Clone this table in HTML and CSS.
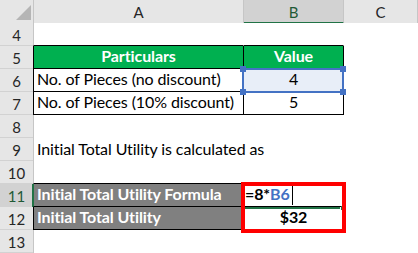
FILE: index.html
```html
<!DOCTYPE html>
<html>
<head>
<meta charset="utf-8">
<link rel="stylesheet" href="styles.css">
</head>
<body>
<div class="sheet">
  <div class="row hdr">
    <div class="corner"><svg width="33" height="23" viewBox="0 0 33 23"><polygon points="31,5 31,20 16,20" fill="#b5b5b5"/></svg></div>
    <div class="ch ca">A</div>
    <div class="ch cb active">B</div>
    <div class="ch cc">C</div>
  </div>
  <div class="row">
    <div class="rh">4</div>
    <div class="c a bb"></div>
    <div class="c b bb"></div>
    <div class="c"></div>
  </div>
  <div class="row">
    <div class="rh">5</div>
    <div class="c a t green bold center">Particulars</div>
    <div class="c b t green bold center">Value</div>
    <div class="c"></div>
  </div>
  <div class="row">
    <div class="rh">6</div>
    <div class="c a t">No. of Pieces (no discount)</div>
    <div class="c b t center selfill">4</div>
    <div class="c"></div>
  </div>
  <div class="row">
    <div class="rh">7</div>
    <div class="c a t">No. of Pieces (10% discount)</div>
    <div class="c b t center">5</div>
    <div class="c"></div>
  </div>
  <div class="row">
    <div class="rh">8</div>
    <div class="c a"></div>
    <div class="c b"></div>
    <div class="c"></div>
  </div>
  <div class="row">
    <div class="rh">9</div>
    <div class="c a over">Initial Total Utility is calculated as</div>
    <div class="c b"></div>
    <div class="c"></div>
  </div>
  <div class="row">
    <div class="rh">10</div>
    <div class="c a bb"></div>
    <div class="c b bb"></div>
    <div class="c"></div>
  </div>
  <div class="row">
    <div class="rh activerow">11</div>
    <div class="c a t gray bold act">Initial Total Utility Formula</div>
    <div class="c b t bold formula">=8*<span class="ref">B6</span><span class="caret"></span></div>
    <div class="c"></div>
  </div>
  <div class="row">
    <div class="rh">12</div>
    <div class="c a t gray bold">Initial Total Utility</div>
    <div class="c b t bold center">$32</div>
    <div class="c"></div>
  </div>
  <div class="row">
    <div class="rh">13</div>
    <div class="c a"></div>
    <div class="c b"></div>
    <div class="c"></div>
  </div>

  <div class="selbox">
    <span class="h tl"></span><span class="h tr"></span><span class="h bl"></span><span class="h br"></span>
  </div>
  <div class="activeline"></div>
  <div class="activeknob"></div>
  <div class="redbox"></div>
</div>
</body>
</html>
```

FILE: styles.css
```css
* { box-sizing: border-box; }
html, body { margin: 0; padding: 0; background: #fff; }
body { width: 418px; height: 253px; overflow: hidden; }

.sheet {
  position: relative;
  width: 418px;
  height: 253px;
  overflow: hidden;
  font-family: Lato, "Liberation Sans", sans-serif;
  color: #000;
}

.row {
  display: grid;
  grid-template-columns: 33px 211px 100px 74px;
  height: 23px;
}

/* header row */
.hdr .corner {
  background: #e6e6e6;
  border-bottom: 1px solid #ababab;
}
.hdr .corner svg { display: block; }
.ch {
  background: #e6e6e6;
  border-bottom: 1px solid #ababab;
  border-right: 1px solid #c6c6c6;
  display: flex;
  align-items: center;
  justify-content: center;
  font-size: 15px;
  color: #262626;
  padding-top: 1px;
}
.ch.ca { border-left: 1px solid #c6c6c6; }
.ch.active {
  background: #d2d2d2;
  border-bottom: 2px solid #217346;
  color: #1f5a36;
}

/* row headers */
.rh {
  background: #e6e6e6;
  border-bottom: 1px solid #d2d2d2;
  display: flex;
  align-items: center;
  justify-content: center;
  font-size: 15px;
  color: #262626;
  padding-top: 1px;
}
.rh.activerow {
  background: #d2d2d2;
  color: #1f5a36;
}

/* cells */
.c {
  display: flex;
  align-items: flex-end;
  padding: 0 3px 2px 3px;
  font-size: 16px;
  letter-spacing: -0.1px;
  line-height: 20px;
  white-space: nowrap;
  background: #fff;
}
.c.a { border-left: 1px solid #c6c6c6; border-right: 1px solid transparent; }
.c.b { border-right: 1px solid transparent; }
.c.bb { border-bottom: 1px solid #000; }
.c.t { border-bottom: 1px solid #000; border-right: 1px solid #000; }
.c.a.t { border-left-color: #000; }
.c.a.act { border-left: 1px solid #217346; box-shadow: -1px 0 0 #217346; }
.over { overflow: visible; position: relative; z-index: 1; background: transparent; }

.center { justify-content: center; }
.bold { font-weight: 700; }
.green { background: #00b050; color: #fff; }
.gray { background: #808080; color: #fff; }
.selfill { background: #e8eef8; }

.formula { padding-left: 1px; }
.ref { color: #4472c4; }
.caret {
  display: inline-block;
  width: 1px;
  height: 20px;
  background: #000;
  margin-left: 2px;
  align-self: flex-end;
  margin-bottom: -1px;
}

/* overlays */
.selbox {
  position: absolute;
  left: 242px;
  top: 68px;
  width: 102px;
  height: 25px;
  border: 2px solid #4472c4;
}
.selbox .h {
  position: absolute;
  width: 6px;
  height: 6px;
  background: #4472c4;
}
.selbox .tl { left: -4px; top: -4px; }
.selbox .tr { right: -4px; top: -4px; }
.selbox .bl { left: -4px; bottom: -4px; }
.selbox .br { right: -4px; bottom: -4px; }

.activeline {
  position: absolute;
  left: 244px;
  top: 207px;
  width: 96px;
  height: 2px;
  background: #217346;
}
.activeknob {
  position: absolute;
  left: 341px;
  top: 206px;
  width: 3px;
  height: 4px;
  background: #217346;
}
.redbox {
  position: absolute;
  left: 241px;
  top: 182px;
  width: 105px;
  height: 51px;
  border: 4px solid #ff0000;
}
```
